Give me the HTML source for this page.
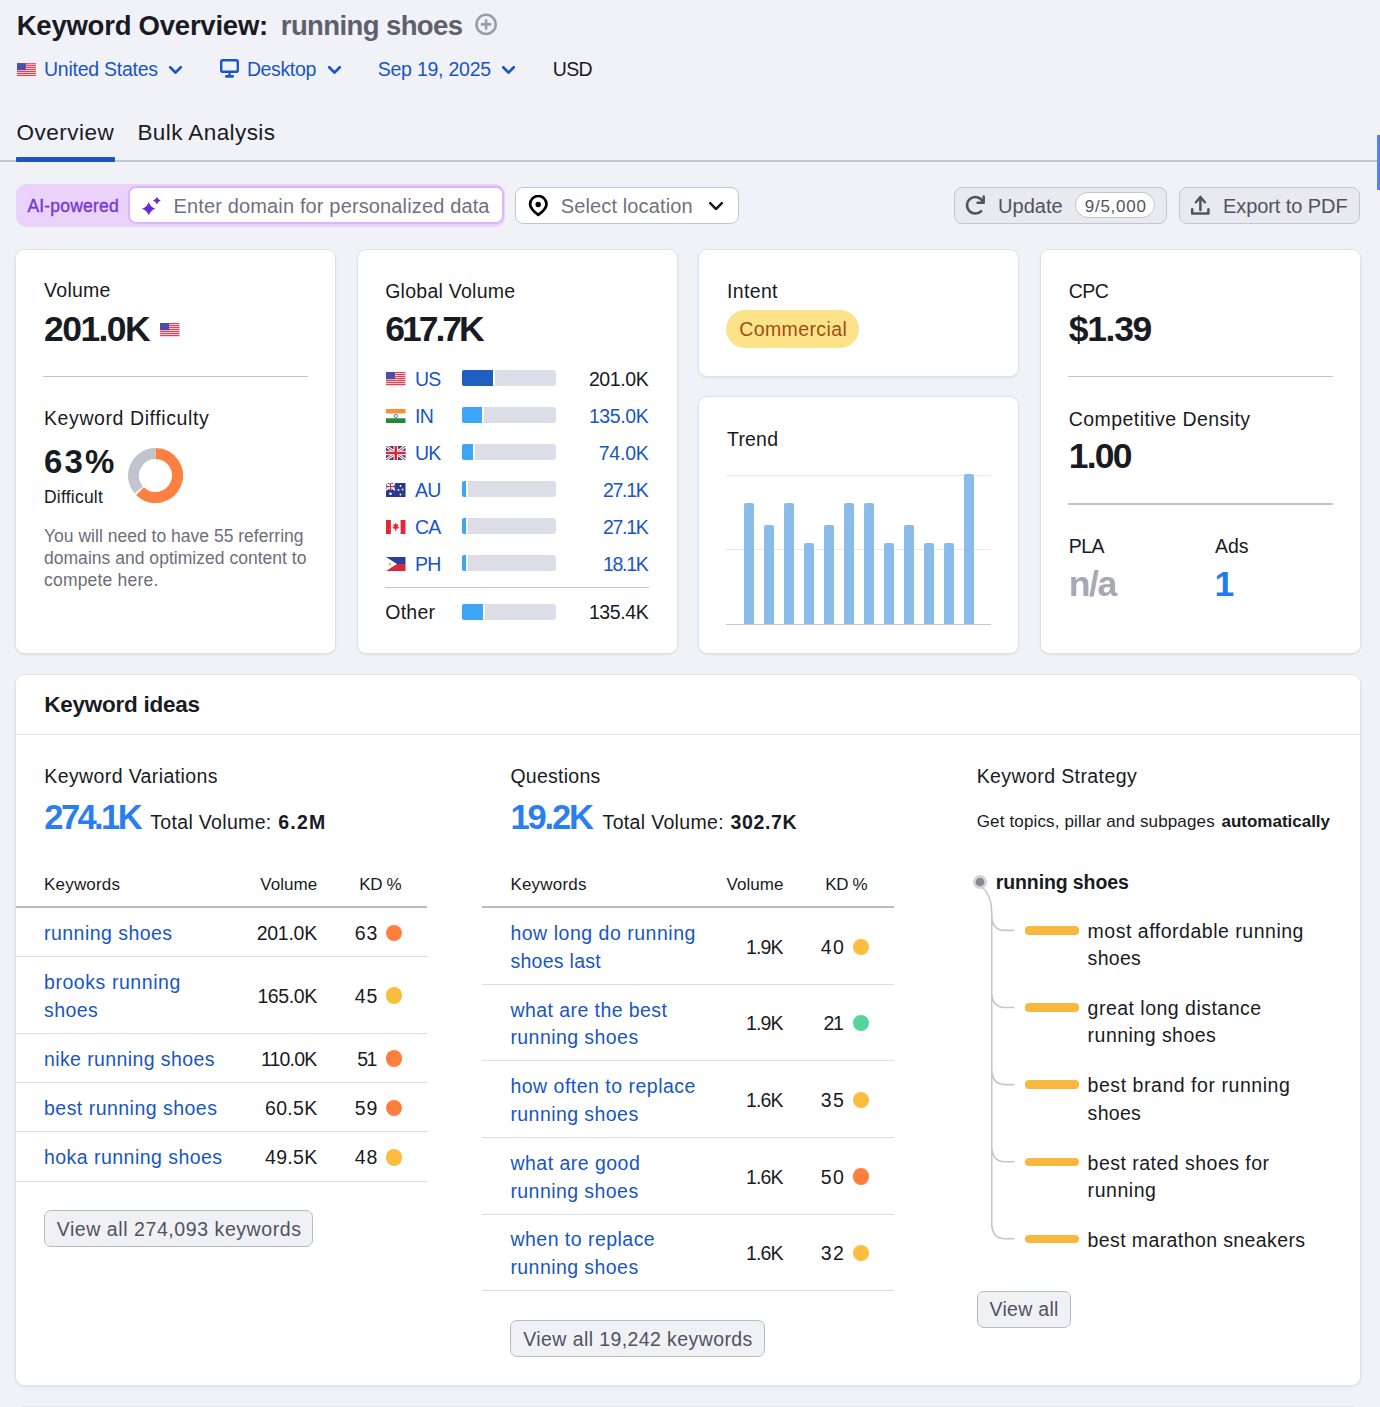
<!DOCTYPE html><html><head><meta charset="utf-8"><style>
html,body{margin:0;padding:0;}
body{width:1380px;height:1407px;overflow:hidden;background:#f1f2f7;position:relative;font-family:"Liberation Sans",sans-serif;}
.t{position:absolute;white-space:nowrap;line-height:1;}
.a{position:absolute;}
</style></head><body>
<div class="t" style="top:12.00px;font-size:27.5px;color:#191b23;font-weight:700;letter-spacing:-0.231px;left:16.70px;">Keyword Overview:</div>
<div class="t" style="top:12.00px;font-size:27.5px;color:#5e606c;font-weight:700;letter-spacing:-0.600px;left:280.80px;">running shoes</div>
<svg class="a" style="left:475.00px;top:13.00px;" width="23" height="23" viewBox="0 0 23 23"><circle cx="11.1" cy="11.4" r="9.6" fill="none" stroke="#9a9ca7" stroke-width="2.6"/><path d="M11.1 7.2V15.6M6.9 11.4H15.3" stroke="#9a9ca7" stroke-width="2.6" stroke-linecap="round"/></svg>
<svg class="a" style="left:17.00px;top:62.60px;" width="19" height="14" viewBox="0 0 19.5 14"><rect width="19.5" height="14" fill="#fff"/><rect x="0" y="0" width="19.5" height="1.25" fill="#ee3d50"/><rect x="0" y="2" width="19.5" height="1.25" fill="#ee3d50"/><rect x="0" y="4" width="19.5" height="1.25" fill="#ee3d50"/><rect x="0" y="6" width="19.5" height="1.25" fill="#ee3d50"/><rect x="0" y="8" width="19.5" height="1.25" fill="#ee3d50"/><rect x="0" y="10" width="19.5" height="1.25" fill="#ee3d50"/><rect x="0" y="12" width="19.5" height="1.25" fill="#ee3d50"/><rect width="9" height="7.2" fill="#4b4ea6"/></svg>
<div class="t" style="top:60.00px;font-size:19.5px;color:#1856c4;letter-spacing:-0.258px;left:44.00px;">United States</div>
<svg class="a" style="left:168.50px;top:65.50px;" width="13" height="8" viewBox="0 0 13 8"><path d="M1.2 1.2L6.5 6.6L11.8 1.2" fill="none" stroke="#1856c4" stroke-width="2.7" stroke-linecap="round" stroke-linejoin="round"/></svg>
<svg class="a" style="left:220.00px;top:59.00px;" width="19" height="20" viewBox="0 0 19 20"><rect x="1.2" y="1.2" width="16.6" height="11.6" rx="1.6" fill="none" stroke="#1856c4" stroke-width="2.4"/><path d="M9.5 12.8V16.5" stroke="#1856c4" stroke-width="2.4"/><rect x="5" y="16" width="9" height="2.8" rx="1.4" fill="#1856c4"/></svg>
<div class="t" style="top:60.00px;font-size:19.5px;color:#1856c4;letter-spacing:-0.361px;left:246.90px;">Desktop</div>
<svg class="a" style="left:327.60px;top:65.50px;" width="13" height="8" viewBox="0 0 13 8"><path d="M1.2 1.2L6.5 6.6L11.8 1.2" fill="none" stroke="#1856c4" stroke-width="2.7" stroke-linecap="round" stroke-linejoin="round"/></svg>
<div class="t" style="top:60.00px;font-size:19.5px;color:#1856c4;letter-spacing:-0.230px;left:377.70px;">Sep 19, 2025</div>
<svg class="a" style="left:502.00px;top:65.50px;" width="13" height="8" viewBox="0 0 13 8"><path d="M1.2 1.2L6.5 6.6L11.8 1.2" fill="none" stroke="#1856c4" stroke-width="2.7" stroke-linecap="round" stroke-linejoin="round"/></svg>
<div class="t" style="top:60.00px;font-size:19.5px;color:#191b23;letter-spacing:-0.600px;left:552.70px;">USD</div>
<div class="t" style="top:122.00px;font-size:22.5px;color:#191b23;letter-spacing:0.511px;left:16.50px;">Overview</div>
<div class="t" style="top:122.00px;font-size:22.5px;color:#191b23;letter-spacing:0.423px;left:137.40px;">Bulk Analysis</div>
<div class="a" style="left:0.00px;top:160.00px;width:1377.00px;height:2.00px;background:#c6c8cf;"></div>
<div class="a" style="left:16.00px;top:157.00px;width:98.60px;height:4.50px;background:#1b55c0;border-radius:1px;"></div>
<div class="a" style="left:1377.00px;top:135.00px;width:3.00px;height:55.00px;background:#5b7ff5;"></div>
<div class="a" style="left:15.70px;top:183.70px;width:489.80px;height:43.50px;background:#ead2fb;border-radius:10px;"></div>
<div class="t" style="top:198.00px;font-size:17.5px;color:#7538d4;letter-spacing:0.199px;left:27.40px;-webkit-text-stroke:0.35px #7538d4;">AI-powered</div>
<div class="a" style="left:128.00px;top:186.00px;width:376.00px;height:38.30px;background:#fff;border:2px solid #ddb6f8;border-radius:8px;box-sizing:border-box;"></div>
<svg class="a" style="left:140.50px;top:195.50px;" width="21" height="21" viewBox="0 0 21 21"><path d="M7.7 6.000000000000001Q9.3 11.200000000000001 14.5 12.8Q9.3 14.4 7.7 19.6Q6.1 14.4 0.9000000000000004 12.8Q6.1 11.200000000000001 7.7 6.000000000000001Z" fill="#6f2ad8"/><path d="M15.9 0.6999999999999997Q16.8 3.6999999999999997 19.8 4.6Q16.8 5.5 15.9 8.5Q15.0 5.5 12.0 4.6Q15.0 3.6999999999999997 15.9 0.6999999999999997Z" fill="#6f2ad8"/></svg>
<div class="t" style="top:196.00px;font-size:20px;color:#6f717d;letter-spacing:0.139px;left:173.60px;">Enter domain for personalized data</div>
<div class="a" style="left:514.60px;top:186.60px;width:224.40px;height:37.70px;background:#fff;border:1px solid #c3c5cd;border-radius:8px;box-sizing:border-box;"></div>
<svg class="a" style="left:527.50px;top:194.50px;" width="21" height="22" viewBox="0 0 21 22"><path d="M10.3 19.9C6.2 16.8 2.1 13.2 2.1 9.2A8.2 8.2 0 0 1 18.5 9.2C18.5 13.2 14.4 16.8 10.3 19.9Z" fill="none" stroke="#000" stroke-width="2.7" stroke-linejoin="round"/><circle cx="10.2" cy="9.5" r="2.7" fill="#000"/></svg>
<div class="t" style="top:196.00px;font-size:20px;color:#6f717d;letter-spacing:0.136px;left:560.70px;">Select location</div>
<svg class="a" style="left:709.00px;top:201.50px;" width="14" height="8.5" viewBox="0 0 14 8.5"><path d="M1.2 1.2L7.0 7.1L12.8 1.2" fill="none" stroke="#191b23" stroke-width="2.5" stroke-linecap="round" stroke-linejoin="round"/></svg>
<div class="a" style="left:953.80px;top:186.70px;width:213.00px;height:37.20px;background:#e9eaef;border:1px solid #c4c6ce;border-radius:8px;box-sizing:border-box;"></div>
<svg class="a" style="left:965.00px;top:195.00px;" width="21" height="21" viewBox="0 0 21 21"><path d="M16.3 16.1A8.3 8.3 0 1 1 17.6 6.2" fill="none" stroke="#50535e" stroke-width="2.5" stroke-linecap="round"/><path d="M12.6 7.8H18.7V1.6" fill="none" stroke="#50535e" stroke-width="2.5" stroke-linecap="round" stroke-linejoin="round"/></svg>
<div class="t" style="top:196.00px;font-size:20px;color:#50535e;letter-spacing:0.040px;left:998.00px;">Update</div>
<div class="a" style="left:1075.30px;top:192.30px;width:80.10px;height:25.90px;background:#fff;border:1px solid #c4c6ce;border-radius:13px;box-sizing:border-box;"></div>
<div class="t" style="top:198.00px;font-size:17px;color:#50535e;letter-spacing:0.767px;left:1084.70px;">9/5,000</div>
<div class="a" style="left:1178.80px;top:186.70px;width:181.00px;height:37.20px;background:#e9eaef;border:1px solid #c4c6ce;border-radius:8px;box-sizing:border-box;"></div>
<svg class="a" style="left:1190.00px;top:195.00px;" width="21" height="21" viewBox="0 0 21 21"><path d="M10.4 15V2M5.9 7.2L10.4 2L14.9 7.2" fill="none" stroke="#50535e" stroke-width="2.5" stroke-linecap="round" stroke-linejoin="round"/><path d="M2.2 14.2V18.6H18.4V14.2" fill="none" stroke="#50535e" stroke-width="2.5" stroke-linecap="round" stroke-linejoin="round"/></svg>
<div class="t" style="top:196.00px;font-size:20px;color:#50535e;letter-spacing:-0.075px;left:1223.00px;">Export to PDF</div>
<div class="a" style="left:15.40px;top:249.00px;width:321.10px;height:404.60px;background:#fff;border:1px solid #e0e1e6;border-radius:9px;box-shadow:0 1px 2px rgba(30,35,60,0.08);box-sizing:border-box;"></div>
<div class="a" style="left:357.20px;top:249.00px;width:320.50px;height:404.60px;background:#fff;border:1px solid #e0e1e6;border-radius:9px;box-shadow:0 1px 2px rgba(30,35,60,0.08);box-sizing:border-box;"></div>
<div class="a" style="left:698.30px;top:249.00px;width:320.50px;height:127.70px;background:#fff;border:1px solid #e0e1e6;border-radius:9px;box-shadow:0 1px 2px rgba(30,35,60,0.08);box-sizing:border-box;"></div>
<div class="a" style="left:698.30px;top:396.40px;width:320.50px;height:257.20px;background:#fff;border:1px solid #e0e1e6;border-radius:9px;box-shadow:0 1px 2px rgba(30,35,60,0.08);box-sizing:border-box;"></div>
<div class="a" style="left:1039.50px;top:249.00px;width:321.50px;height:404.60px;background:#fff;border:1px solid #e0e1e6;border-radius:9px;box-shadow:0 1px 2px rgba(30,35,60,0.08);box-sizing:border-box;"></div>
<div class="t" style="top:281.00px;font-size:19.5px;color:#191b23;letter-spacing:0.253px;left:44.10px;">Volume</div>
<div class="t" style="top:312.00px;font-size:35.5px;color:#191b23;font-weight:700;letter-spacing:-1.597px;left:44.10px;">201.0K</div>
<svg class="a" style="left:160.40px;top:323.00px;" width="19.6" height="14" viewBox="0 0 19.5 14"><rect width="19.5" height="14" fill="#fff"/><rect x="0" y="0" width="19.5" height="1.25" fill="#ee3d50"/><rect x="0" y="2" width="19.5" height="1.25" fill="#ee3d50"/><rect x="0" y="4" width="19.5" height="1.25" fill="#ee3d50"/><rect x="0" y="6" width="19.5" height="1.25" fill="#ee3d50"/><rect x="0" y="8" width="19.5" height="1.25" fill="#ee3d50"/><rect x="0" y="10" width="19.5" height="1.25" fill="#ee3d50"/><rect x="0" y="12" width="19.5" height="1.25" fill="#ee3d50"/><rect width="9" height="7.2" fill="#4b4ea6"/></svg>
<div class="a" style="left:43.00px;top:375.50px;width:265.00px;height:1.50px;background:#c0c2cb;"></div>
<div class="t" style="top:409.00px;font-size:19.5px;color:#191b23;letter-spacing:0.592px;left:44.00px;">Keyword Difficulty</div>
<div class="t" style="top:445.00px;font-size:33px;color:#191b23;font-weight:700;letter-spacing:2.150px;left:44.00px;">63%</div>
<svg class="a" style="left:128.30px;top:447.80px;" width="55" height="55" viewBox="0 0 55 55"><path d="M27.50 5.50A22 22 0 1 1 12.00 43.11" fill="none" stroke="#fd7f42" stroke-width="11"/><path d="M10.95 41.99A22 22 0 0 1 27.48 5.50" fill="none" stroke="#c2c4cc" stroke-width="11"/></svg>
<div class="t" style="top:489.00px;font-size:17.5px;color:#191b23;letter-spacing:0.219px;left:44.00px;">Difficult</div>
<div class="t" style="top:528.00px;font-size:17.5px;color:#6c6e79;letter-spacing:0.013px;left:44.00px;">You will need to have 55 referring</div>
<div class="t" style="top:550.00px;font-size:17.5px;color:#6c6e79;letter-spacing:0.025px;left:44.00px;">domains and optimized content to</div>
<div class="t" style="top:572.00px;font-size:17.5px;color:#6c6e79;letter-spacing:0.200px;left:44.00px;">compete here.</div>
<div class="t" style="top:282.00px;font-size:19.5px;color:#191b23;letter-spacing:0.263px;left:385.20px;">Global Volume</div>
<div class="t" style="top:312.00px;font-size:35.5px;color:#191b23;font-weight:700;letter-spacing:-3.000px;left:385.20px;">617.7K</div>
<svg class="a" style="left:386.00px;top:371.80px;" width="19.5" height="14" viewBox="0 0 19.5 14"><rect width="19.5" height="14" fill="#fff"/><rect x="0" y="0" width="19.5" height="1.25" fill="#ee3d50"/><rect x="0" y="2" width="19.5" height="1.25" fill="#ee3d50"/><rect x="0" y="4" width="19.5" height="1.25" fill="#ee3d50"/><rect x="0" y="6" width="19.5" height="1.25" fill="#ee3d50"/><rect x="0" y="8" width="19.5" height="1.25" fill="#ee3d50"/><rect x="0" y="10" width="19.5" height="1.25" fill="#ee3d50"/><rect x="0" y="12" width="19.5" height="1.25" fill="#ee3d50"/><rect width="9" height="7.2" fill="#4b4ea6"/></svg>
<div class="t" style="top:370.00px;font-size:19.5px;color:#1856c4;letter-spacing:-0.600px;left:414.90px;">US</div>
<div class="a" style="left:461.70px;top:370.20px;width:94.20px;height:16.20px;background:#dcdde6;border-radius:3px;"></div>
<div class="a" style="left:461.70px;top:370.20px;width:31.00px;height:16.20px;background:#1f5fc0;border-radius:2px;border-right:2px solid #fff;"></div>
<div class="t" style="top:370.00px;font-size:19.5px;color:#191b23;letter-spacing:-0.383px;right:731.59px;">201.0K</div>
<svg class="a" style="left:386.00px;top:408.80px;" width="19.5" height="14" viewBox="0 0 19.5 14"><rect width="19.5" height="4.7" fill="#f7903a"/><rect y="4.7" width="19.5" height="4.6" fill="#fff"/><rect y="9.3" width="19.5" height="4.7" fill="#218a3a"/><circle cx="9.75" cy="7" r="1.7" fill="none" stroke="#2a3a9a" stroke-width="0.7"/></svg>
<div class="t" style="top:407.00px;font-size:19.5px;color:#1856c4;letter-spacing:-0.600px;left:414.90px;">IN</div>
<div class="a" style="left:461.70px;top:407.20px;width:94.20px;height:16.20px;background:#dcdde6;border-radius:3px;"></div>
<div class="a" style="left:461.70px;top:407.20px;width:20.50px;height:16.20px;background:#3ea6f7;border-radius:2px;border-right:2px solid #fff;"></div>
<div class="t" style="top:407.00px;font-size:19.5px;color:#1856c4;letter-spacing:-0.383px;right:731.59px;">135.0K</div>
<svg class="a" style="left:386.00px;top:445.80px;" width="19.5" height="14" viewBox="0 0 19.5 14"><rect width="19.5" height="14" fill="#2c3a8c"/><path d="M0 0L19.5 14M19.5 0L0 14" stroke="#fff" stroke-width="3"/><path d="M0 0L19.5 14M19.5 0L0 14" stroke="#d8283a" stroke-width="1"/><path d="M9.75 0V14M0 7H19.5" stroke="#fff" stroke-width="4.5"/><path d="M9.75 0V14M0 7H19.5" stroke="#d8283a" stroke-width="2.5"/></svg>
<div class="t" style="top:444.00px;font-size:19.5px;color:#1856c4;letter-spacing:-0.600px;left:414.90px;">UK</div>
<div class="a" style="left:461.70px;top:444.20px;width:94.20px;height:16.20px;background:#dcdde6;border-radius:3px;"></div>
<div class="a" style="left:461.70px;top:444.20px;width:11.50px;height:16.20px;background:#3ea6f7;border-radius:2px;border-right:2px solid #fff;"></div>
<div class="t" style="top:444.00px;font-size:19.5px;color:#1856c4;letter-spacing:-0.223px;right:731.46px;">74.0K</div>
<svg class="a" style="left:386.00px;top:482.80px;" width="19.5" height="14" viewBox="0 0 19.5 14"><rect width="19.5" height="14" fill="#2a3890"/><path d="M0 0L9 7M9 0L0 7" stroke="#fff" stroke-width="1.6"/><path d="M4.5 0V7M0 3.5H9" stroke="#fff" stroke-width="2.2"/><path d="M4.5 0V7M0 3.5H9" stroke="#d8283a" stroke-width="1.1"/><circle cx="4.5" cy="10.8" r="1.3" fill="#fff"/><circle cx="14.5" cy="3" r="0.9" fill="#fff"/><circle cx="12.5" cy="7" r="0.9" fill="#fff"/><circle cx="16.5" cy="6.5" r="0.9" fill="#fff"/><circle cx="14.5" cy="11.5" r="0.9" fill="#fff"/></svg>
<div class="t" style="top:481.00px;font-size:19.5px;color:#1856c4;letter-spacing:-0.600px;left:414.90px;">AU</div>
<div class="a" style="left:461.70px;top:481.20px;width:94.20px;height:16.20px;background:#dcdde6;border-radius:3px;"></div>
<div class="a" style="left:461.70px;top:481.20px;width:4.50px;height:16.20px;background:#3ea6f7;border-radius:2px;border-right:2px solid #fff;"></div>
<div class="t" style="top:481.00px;font-size:19.5px;color:#1856c4;letter-spacing:-1.300px;right:732.53px;">27.1K</div>
<svg class="a" style="left:386.00px;top:519.80px;" width="19.5" height="14" viewBox="0 0 19.5 14"><rect width="19.5" height="14" fill="#fff"/><rect width="4.9" height="14" fill="#e1283a"/><rect x="14.6" width="4.9" height="14" fill="#e1283a"/><path d="M9.75 2.5L10.6 4.6L12.2 4.1L11.6 7.2L13 6.6L12.6 8.3L10.3 9.1V11.2H9.2V9.1L6.9 8.3L6.5 6.6L7.9 7.2L7.3 4.1L8.9 4.6Z" fill="#e1283a"/></svg>
<div class="t" style="top:518.00px;font-size:19.5px;color:#1856c4;letter-spacing:-0.600px;left:414.90px;">CA</div>
<div class="a" style="left:461.70px;top:518.20px;width:94.20px;height:16.20px;background:#dcdde6;border-radius:3px;"></div>
<div class="a" style="left:461.70px;top:518.20px;width:4.50px;height:16.20px;background:#3ea6f7;border-radius:2px;border-right:2px solid #fff;"></div>
<div class="t" style="top:518.00px;font-size:19.5px;color:#1856c4;letter-spacing:-1.300px;right:732.53px;">27.1K</div>
<svg class="a" style="left:386.00px;top:556.80px;" width="19.5" height="14" viewBox="0 0 19.5 14"><rect width="19.5" height="7" fill="#2a3fa0"/><rect y="7" width="19.5" height="7" fill="#d8283a"/><path d="M0 0L11 7L0 14Z" fill="#fff"/><circle cx="3.8" cy="7" r="1.5" fill="#f6c542"/></svg>
<div class="t" style="top:555.00px;font-size:19.5px;color:#1856c4;letter-spacing:-0.600px;left:414.90px;">PH</div>
<div class="a" style="left:461.70px;top:555.20px;width:94.20px;height:16.20px;background:#dcdde6;border-radius:3px;"></div>
<div class="a" style="left:461.70px;top:555.20px;width:4.50px;height:16.20px;background:#3ea6f7;border-radius:2px;border-right:2px solid #fff;"></div>
<div class="t" style="top:555.00px;font-size:19.5px;color:#1856c4;letter-spacing:-1.300px;right:732.53px;">18.1K</div>
<div class="a" style="left:385.00px;top:586.80px;width:264.00px;height:1.20px;background:#c0c2cb;"></div>
<div class="t" style="top:603.00px;font-size:19.5px;color:#191b23;letter-spacing:0.287px;left:385.20px;">Other</div>
<div class="a" style="left:461.70px;top:603.70px;width:94.20px;height:16.20px;background:#dcdde6;border-radius:3px;"></div>
<div class="a" style="left:461.70px;top:603.70px;width:21.30px;height:16.20px;background:#3ea6f7;border-radius:2px;border-right:2px solid #fff;"></div>
<div class="t" style="top:603.00px;font-size:19.5px;color:#191b23;letter-spacing:-0.383px;right:731.59px;">135.4K</div>
<div class="t" style="top:282.00px;font-size:19.5px;color:#191b23;letter-spacing:0.350px;left:727.00px;">Intent</div>
<div class="a" style="left:726.40px;top:310.20px;width:132.90px;height:38.00px;background:#fce38a;border-radius:19px;"></div>
<div class="t" style="top:320.00px;font-size:19.5px;color:#9c4f12;letter-spacing:0.385px;left:739.30px;">Commercial</div>
<div class="t" style="top:430.00px;font-size:19.5px;color:#191b23;letter-spacing:0.197px;left:727.00px;">Trend</div>
<div class="a" style="left:726.40px;top:474.50px;width:264.60px;height:1.00px;background:#e8e9ed;"></div>
<div class="a" style="left:726.40px;top:549.00px;width:264.60px;height:1.00px;background:#e8e9ed;"></div>
<div class="a" style="left:743.70px;top:502.80px;width:10.50px;height:121.20px;background:#8abcea;border-radius:2px 2px 0 0;"></div>
<div class="a" style="left:763.70px;top:525.20px;width:10.50px;height:98.80px;background:#8abcea;border-radius:2px 2px 0 0;"></div>
<div class="a" style="left:783.70px;top:502.80px;width:10.50px;height:121.20px;background:#8abcea;border-radius:2px 2px 0 0;"></div>
<div class="a" style="left:803.70px;top:543.10px;width:10.50px;height:80.90px;background:#8abcea;border-radius:2px 2px 0 0;"></div>
<div class="a" style="left:823.70px;top:525.20px;width:10.50px;height:98.80px;background:#8abcea;border-radius:2px 2px 0 0;"></div>
<div class="a" style="left:843.70px;top:502.80px;width:10.50px;height:121.20px;background:#8abcea;border-radius:2px 2px 0 0;"></div>
<div class="a" style="left:863.70px;top:502.80px;width:10.50px;height:121.20px;background:#8abcea;border-radius:2px 2px 0 0;"></div>
<div class="a" style="left:883.70px;top:543.10px;width:10.50px;height:80.90px;background:#8abcea;border-radius:2px 2px 0 0;"></div>
<div class="a" style="left:903.70px;top:525.20px;width:10.50px;height:98.80px;background:#8abcea;border-radius:2px 2px 0 0;"></div>
<div class="a" style="left:923.70px;top:543.10px;width:10.50px;height:80.90px;background:#8abcea;border-radius:2px 2px 0 0;"></div>
<div class="a" style="left:943.70px;top:543.10px;width:10.50px;height:80.90px;background:#8abcea;border-radius:2px 2px 0 0;"></div>
<div class="a" style="left:963.70px;top:474.40px;width:10.50px;height:149.60px;background:#8abcea;border-radius:2px 2px 0 0;"></div>
<div class="a" style="left:726.40px;top:623.50px;width:264.60px;height:1.50px;background:#c5c7ce;"></div>
<div class="t" style="top:282.00px;font-size:19.5px;color:#191b23;letter-spacing:-0.600px;left:1068.80px;">CPC</div>
<div class="t" style="top:312.00px;font-size:35.5px;color:#191b23;font-weight:700;letter-spacing:-1.332px;left:1068.80px;">$1.39</div>
<div class="a" style="left:1068.00px;top:375.50px;width:264.50px;height:1.50px;background:#c0c2cb;"></div>
<div class="t" style="top:410.00px;font-size:19.5px;color:#191b23;letter-spacing:0.436px;left:1068.80px;">Competitive Density</div>
<div class="t" style="top:439.00px;font-size:35.5px;color:#191b23;font-weight:700;letter-spacing:-1.816px;left:1068.80px;">1.00</div>
<div class="a" style="left:1068.00px;top:503.00px;width:264.50px;height:1.50px;background:#c0c2cb;"></div>
<div class="t" style="top:537.00px;font-size:19.5px;color:#191b23;letter-spacing:-0.600px;left:1068.80px;">PLA</div>
<div class="t" style="top:537.00px;font-size:19.5px;color:#191b23;letter-spacing:-0.069px;left:1215.10px;">Ads</div>
<div class="t" style="top:567.00px;font-size:35.5px;color:#a6a8b2;font-weight:700;letter-spacing:-1.476px;left:1068.80px;">n/a</div>
<div class="t" style="top:567.00px;font-size:35.5px;color:#1f7cf0;font-weight:700;left:1214.50px;">1</div>
<div class="a" style="left:15.40px;top:673.60px;width:1345.60px;height:712.20px;background:#fff;border:1px solid #e0e1e6;border-radius:9px;box-shadow:0 1px 2px rgba(30,35,60,0.08);box-sizing:border-box;"></div>
<div class="t" style="top:694.00px;font-size:22.5px;color:#191b23;font-weight:700;letter-spacing:-0.263px;left:44.30px;">Keyword ideas</div>
<div class="a" style="left:17.00px;top:733.80px;width:1342.30px;height:1.20px;background:#e1e2e7;"></div>
<div class="t" style="top:767.00px;font-size:19.5px;color:#191b23;letter-spacing:0.386px;left:44.30px;">Keyword Variations</div>
<div class="t" style="top:800.00px;font-size:34.5px;color:#2a7ef0;font-weight:700;letter-spacing:-2.593px;left:44.30px;">274.1K</div>
<div class="t" style="top:813.00px;font-size:19.5px;color:#191b23;letter-spacing:0.325px;left:150.30px;">Total Volume:</div>
<div class="t" style="top:813.00px;font-size:19.5px;color:#191b23;font-weight:700;letter-spacing:1.204px;left:278.30px;">6.2M</div>
<div class="t" style="top:876.00px;font-size:17px;color:#191b23;letter-spacing:0.196px;left:44.00px;">Keywords</div>
<div class="t" style="top:876.00px;font-size:17px;color:#191b23;letter-spacing:0.061px;right:1062.73px;">Volume</div>
<div class="t" style="top:876.00px;font-size:17px;color:#191b23;letter-spacing:-0.345px;right:978.63px;">KD %</div>
<div class="a" style="left:16.00px;top:906.00px;width:411.10px;height:2.00px;background:#b9bbc4;"></div>
<div class="a" style="left:16.00px;top:955.80px;width:411.10px;height:1.00px;background:#dcdde3;"></div>
<div class="a" style="left:16.00px;top:1032.70px;width:411.10px;height:1.00px;background:#dcdde3;"></div>
<div class="a" style="left:16.00px;top:1081.70px;width:411.10px;height:1.00px;background:#dcdde3;"></div>
<div class="a" style="left:16.00px;top:1131.40px;width:411.10px;height:1.00px;background:#dcdde3;"></div>
<div class="a" style="left:16.00px;top:1180.80px;width:411.10px;height:1.00px;background:#dcdde3;"></div>
<div class="t" style="top:924.00px;font-size:19.5px;color:#1856c4;letter-spacing:0.462px;left:44.00px;">running shoes</div>
<div class="t" style="top:924.00px;font-size:19.5px;color:#191b23;letter-spacing:-0.263px;right:1063.07px;">201.0K</div>
<div class="t" style="top:924.00px;font-size:19.5px;color:#191b23;letter-spacing:0.955px;right:1001.60px;">63</div>
<div class="a" style="left:386.00px;top:924.75px;width:16.40px;height:16.40px;background:#ff7f3e;border-radius:50%;"></div>
<div class="t" style="top:973.00px;font-size:19.5px;color:#1856c4;letter-spacing:0.562px;left:44.00px;">brooks running</div>
<div class="t" style="top:1001.00px;font-size:19.5px;color:#1856c4;letter-spacing:0.459px;left:44.00px;">shoes</div>
<div class="t" style="top:987.00px;font-size:19.5px;color:#191b23;letter-spacing:-0.403px;right:1063.21px;">165.0K</div>
<div class="t" style="top:987.00px;font-size:19.5px;color:#191b23;letter-spacing:0.955px;right:1001.60px;">45</div>
<div class="a" style="left:386.00px;top:987.35px;width:16.40px;height:16.40px;background:#fbbd3d;border-radius:50%;"></div>
<div class="t" style="top:1050.00px;font-size:19.5px;color:#1856c4;letter-spacing:0.394px;left:44.00px;">nike running shoes</div>
<div class="t" style="top:1050.00px;font-size:19.5px;color:#191b23;letter-spacing:-0.811px;right:1063.60px;">110.0K</div>
<div class="t" style="top:1050.00px;font-size:19.5px;color:#191b23;letter-spacing:-1.500px;right:1004.05px;">51</div>
<div class="a" style="left:386.00px;top:1050.30px;width:16.40px;height:16.40px;background:#ff7f3e;border-radius:50%;"></div>
<div class="t" style="top:1099.00px;font-size:19.5px;color:#1856c4;letter-spacing:0.478px;left:44.00px;">best running shoes</div>
<div class="t" style="top:1099.00px;font-size:19.5px;color:#191b23;letter-spacing:0.302px;right:1062.53px;">60.5K</div>
<div class="t" style="top:1099.00px;font-size:19.5px;color:#191b23;letter-spacing:0.955px;right:1001.60px;">59</div>
<div class="a" style="left:386.00px;top:1099.65px;width:16.40px;height:16.40px;background:#ff7f3e;border-radius:50%;"></div>
<div class="t" style="top:1148.00px;font-size:19.5px;color:#1856c4;letter-spacing:0.463px;left:44.00px;">hoka running shoes</div>
<div class="t" style="top:1148.00px;font-size:19.5px;color:#191b23;letter-spacing:0.302px;right:1062.53px;">49.5K</div>
<div class="t" style="top:1148.00px;font-size:19.5px;color:#191b23;letter-spacing:0.955px;right:1001.60px;">48</div>
<div class="a" style="left:386.00px;top:1149.20px;width:16.40px;height:16.40px;background:#fbbd3d;border-radius:50%;"></div>
<div class="a" style="left:43.50px;top:1210.20px;width:269.50px;height:37.20px;background:#f0f1f4;border:1px solid #b9bbc4;border-radius:7px;box-sizing:border-box;"></div>
<div class="t" style="top:1220.00px;font-size:19.5px;color:#50535e;letter-spacing:0.571px;left:56.70px;">View all 274,093 keywords</div>
<div class="t" style="top:767.00px;font-size:19.5px;color:#191b23;letter-spacing:0.269px;left:510.40px;">Questions</div>
<div class="t" style="top:800.00px;font-size:34.5px;color:#2a7ef0;font-weight:700;letter-spacing:-2.129px;left:510.40px;">19.2K</div>
<div class="t" style="top:813.00px;font-size:19.5px;color:#191b23;letter-spacing:0.325px;left:602.60px;">Total Volume:</div>
<div class="t" style="top:813.00px;font-size:19.5px;color:#191b23;font-weight:700;letter-spacing:0.662px;left:730.50px;">302.7K</div>
<div class="t" style="top:876.00px;font-size:17px;color:#191b23;letter-spacing:0.196px;left:510.40px;">Keywords</div>
<div class="t" style="top:876.00px;font-size:17px;color:#191b23;letter-spacing:0.061px;right:596.43px;">Volume</div>
<div class="t" style="top:876.00px;font-size:17px;color:#191b23;letter-spacing:-0.345px;right:512.63px;">KD %</div>
<div class="a" style="left:482.00px;top:906.00px;width:411.70px;height:2.00px;background:#b9bbc4;"></div>
<div class="a" style="left:482.00px;top:983.70px;width:411.70px;height:1.00px;background:#dcdde3;"></div>
<div class="a" style="left:482.00px;top:1060.20px;width:411.70px;height:1.00px;background:#dcdde3;"></div>
<div class="a" style="left:482.00px;top:1136.70px;width:411.70px;height:1.00px;background:#dcdde3;"></div>
<div class="a" style="left:482.00px;top:1213.60px;width:411.70px;height:1.00px;background:#dcdde3;"></div>
<div class="a" style="left:482.00px;top:1290.10px;width:411.70px;height:1.00px;background:#dcdde3;"></div>
<div class="t" style="top:924.00px;font-size:19.5px;color:#1856c4;letter-spacing:0.522px;left:510.40px;">how long do running</div>
<div class="t" style="top:952.00px;font-size:19.5px;color:#1856c4;letter-spacing:0.284px;left:510.40px;">shoes last</div>
<div class="t" style="top:938.00px;font-size:19.5px;color:#191b23;letter-spacing:-0.824px;right:597.28px;">1.9K</div>
<div class="t" style="top:938.00px;font-size:19.5px;color:#191b23;letter-spacing:1.355px;right:534.90px;">40</div>
<div class="a" style="left:852.50px;top:938.70px;width:16.40px;height:16.40px;background:#fbbd3d;border-radius:50%;"></div>
<div class="t" style="top:1001.00px;font-size:19.5px;color:#1856c4;letter-spacing:0.427px;left:510.50px;">what are the best</div>
<div class="t" style="top:1028.00px;font-size:19.5px;color:#1856c4;letter-spacing:0.437px;left:510.40px;">running shoes</div>
<div class="t" style="top:1014.00px;font-size:19.5px;color:#191b23;letter-spacing:-0.824px;right:597.28px;">1.9K</div>
<div class="t" style="top:1014.00px;font-size:19.5px;color:#191b23;letter-spacing:-1.500px;right:537.75px;">21</div>
<div class="a" style="left:852.50px;top:1015.05px;width:16.40px;height:16.40px;background:#55d59b;border-radius:50%;"></div>
<div class="t" style="top:1077.00px;font-size:19.5px;color:#1856c4;letter-spacing:0.495px;left:510.40px;">how often to replace</div>
<div class="t" style="top:1105.00px;font-size:19.5px;color:#1856c4;letter-spacing:0.437px;left:510.40px;">running shoes</div>
<div class="t" style="top:1091.00px;font-size:19.5px;color:#191b23;letter-spacing:-0.824px;right:597.28px;">1.6K</div>
<div class="t" style="top:1091.00px;font-size:19.5px;color:#191b23;letter-spacing:1.355px;right:534.90px;">35</div>
<div class="a" style="left:852.50px;top:1091.55px;width:16.40px;height:16.40px;background:#fbbd3d;border-radius:50%;"></div>
<div class="t" style="top:1154.00px;font-size:19.5px;color:#1856c4;letter-spacing:0.473px;left:510.50px;">what are good</div>
<div class="t" style="top:1182.00px;font-size:19.5px;color:#1856c4;letter-spacing:0.437px;left:510.40px;">running shoes</div>
<div class="t" style="top:1168.00px;font-size:19.5px;color:#191b23;letter-spacing:-0.824px;right:597.28px;">1.6K</div>
<div class="t" style="top:1168.00px;font-size:19.5px;color:#191b23;letter-spacing:1.355px;right:534.90px;">50</div>
<div class="a" style="left:852.50px;top:1168.25px;width:16.40px;height:16.40px;background:#ff7f3e;border-radius:50%;"></div>
<div class="t" style="top:1230.00px;font-size:19.5px;color:#1856c4;letter-spacing:0.467px;left:510.50px;">when to replace</div>
<div class="t" style="top:1258.00px;font-size:19.5px;color:#1856c4;letter-spacing:0.437px;left:510.40px;">running shoes</div>
<div class="t" style="top:1244.00px;font-size:19.5px;color:#191b23;letter-spacing:-0.824px;right:597.28px;">1.6K</div>
<div class="t" style="top:1244.00px;font-size:19.5px;color:#191b23;letter-spacing:1.355px;right:534.90px;">32</div>
<div class="a" style="left:852.50px;top:1244.95px;width:16.40px;height:16.40px;background:#fbbd3d;border-radius:50%;"></div>
<div class="a" style="left:510.40px;top:1320.20px;width:255.00px;height:37.20px;background:#f0f1f4;border:1px solid #b9bbc4;border-radius:7px;box-sizing:border-box;"></div>
<div class="t" style="top:1330.00px;font-size:19.5px;color:#50535e;letter-spacing:0.406px;left:523.30px;">View all 19,242 keywords</div>
<div class="t" style="top:767.00px;font-size:19.5px;color:#191b23;letter-spacing:0.403px;left:976.70px;">Keyword Strategy</div>
<div class="t" style="top:813.00px;font-size:17px;color:#191b23;letter-spacing:0.153px;left:976.70px;">Get topics, pillar and subpages</div>
<div class="t" style="top:813.00px;font-size:17px;color:#191b23;font-weight:700;letter-spacing:-0.011px;left:1221.50px;">automatically</div>
<svg class="a" style="left:972.00px;top:874.00px;" width="16" height="16" viewBox="0 0 16 16"><circle cx="8" cy="8" r="7" fill="#d4d5db"/><circle cx="8" cy="8" r="4.3" fill="#868893"/></svg>
<div class="t" style="top:873.00px;font-size:19.5px;color:#191b23;font-weight:700;letter-spacing:-0.113px;left:995.80px;">running shoes</div>
<div class="a" style="left:1024.50px;top:926.20px;width:54.20px;height:8.40px;background:#f8b73e;border-radius:4px;"></div>
<div class="t" style="top:922.00px;font-size:19.5px;color:#191b23;letter-spacing:0.516px;left:1087.60px;">most affordable running</div>
<div class="t" style="top:949.00px;font-size:19.5px;color:#191b23;letter-spacing:0.309px;left:1087.60px;">shoes</div>
<div class="a" style="left:1024.50px;top:1003.30px;width:54.20px;height:8.40px;background:#f8b73e;border-radius:4px;"></div>
<div class="t" style="top:999.00px;font-size:19.5px;color:#191b23;letter-spacing:0.485px;left:1087.60px;">great long distance</div>
<div class="t" style="top:1026.00px;font-size:19.5px;color:#191b23;letter-spacing:0.478px;left:1087.60px;">running shoes</div>
<div class="a" style="left:1024.50px;top:1080.40px;width:54.20px;height:8.40px;background:#f8b73e;border-radius:4px;"></div>
<div class="t" style="top:1076.00px;font-size:19.5px;color:#191b23;letter-spacing:0.542px;left:1087.60px;">best brand for running</div>
<div class="t" style="top:1104.00px;font-size:19.5px;color:#191b23;letter-spacing:0.309px;left:1087.60px;">shoes</div>
<div class="a" style="left:1024.50px;top:1157.50px;width:54.20px;height:8.40px;background:#f8b73e;border-radius:4px;"></div>
<div class="t" style="top:1154.00px;font-size:19.5px;color:#191b23;letter-spacing:0.480px;left:1087.60px;">best rated shoes for</div>
<div class="t" style="top:1181.00px;font-size:19.5px;color:#191b23;letter-spacing:0.545px;left:1087.60px;">running</div>
<div class="a" style="left:1024.50px;top:1234.60px;width:54.20px;height:8.40px;background:#f8b73e;border-radius:4px;"></div>
<div class="t" style="top:1231.00px;font-size:19.5px;color:#191b23;letter-spacing:0.394px;left:1087.60px;">best marathon sneakers</div>
<svg class="a" style="left:0;top:0" width="1380" height="1407"><path d="M982 887C989 893 991.7 901 991.7 912V1222.8C991.7 1233.8 996 1238.8 1005 1238.8H1014.3 M991.7 914.4C991.7 925.4 996 930.4 1005 930.4H1014.3 M991.7 991.5C991.7 1002.5 996 1007.5 1005 1007.5H1014.3 M991.7 1068.6C991.7 1079.6 996 1084.6 1005 1084.6H1014.3 M991.7 1145.7C991.7 1156.7 996 1161.7 1005 1161.7H1014.3" fill="none" stroke="#c4c6cd" stroke-width="1.6"/></svg>
<div class="a" style="left:976.70px;top:1291.40px;width:94.70px;height:37.00px;background:#f0f1f4;border:1px solid #b9bbc4;border-radius:7px;box-sizing:border-box;"></div>
<div class="t" style="top:1300.00px;font-size:19.5px;color:#50535e;letter-spacing:0.302px;left:989.50px;">View all</div>
<div class="a" style="left:22.00px;top:1406.00px;width:1332.00px;height:1.00px;background:#e4e5ea;"></div>
</body></html>
